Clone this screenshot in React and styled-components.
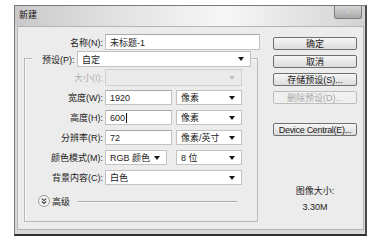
import React from 'react';
import styled, { createGlobalStyle } from 'styled-components';

const GlobalStyle = createGlobalStyle`
  html, body {
    margin: 0;
    padding: 0;
    background: #ffffff;
  }
  body {
    font-family: "Liberation Sans", "Noto Sans CJK SC", sans-serif;
    font-size: 9px;
    color: #222222;
  }
`;

const Page = styled.div`
  padding: 5px 12px 0 14px;
`;

const Window = styled.div`
  box-sizing: border-box;
  width: 353px;
  height: 231px;
  display: flex;
  flex-direction: column;
  padding: 0 1px 4px 2px;
  background: #d8d8d8;
  border: 1px solid #7a7a7a;
  border-right: 2px solid #4a4a4a;
  border-bottom: 2px solid #2e2e2e;
`;

const TitleBar = styled.div`
  height: 20px;
  display: flex;
  justify-content: space-between;
  align-items: flex-start;
  background: linear-gradient(to right, #c9c9c9 0%, #e6e6e6 35%, #f7f7f7 60%, #d2d2d2 100%);
  margin: 0 -1px 0 -2px;
`;

const Title = styled.span`
  padding-left: 4px;
  line-height: 18px;
  font-size: 9px;
  color: #111;
`;

const CloseButton = styled.div`
  width: 28px;
  height: 13px;
  margin-right: 3px;
  box-sizing: border-box;
  border: 1px solid #7d7d7d;
  border-top: none;
  border-radius: 0 0 3px 3px;
  background: linear-gradient(to bottom, #d8d8d8, #a9a9a9);
  color: #f4f4f4;
  font-size: 9px;
  line-height: 11px;
  text-align: center;
  text-shadow: 0 0 1px #555;
`;

const Body = styled.div`
  flex: 1;
  display: flex;
  background: #ececec;
  border: 1px solid #b4b4b4;
`;

const LeftCol = styled.div`
  width: 243px;
  display: flex;
  flex-direction: column;
`;

const RightCol = styled.div`
  width: 84px;
  margin-left: 12px;
  padding-top: 10px;
  display: flex;
  flex-direction: column;
  gap: 5px;
`;

const NameRow = styled.div`
  margin-top: 7px;
  height: 16px;
  display: flex;
  align-items: center;
`;

const Label = styled.span`
  width: ${p => p.$w}px;
  margin-right: 2px;
  text-align: right;
  white-space: nowrap;
  color: ${p => (p.$disabled ? '#b0b0b0' : '#222')};
`;

const TextBox = styled.div`
  box-sizing: border-box;
  width: ${p => p.$w}px;
  height: ${p => p.$h || 15}px;
  padding-left: 4px;
  display: flex;
  align-items: center;
  background: #ffffff;
  border: 1px solid #c2c2c2;
  border-top-color: #a9a9a9;
  white-space: nowrap;
`;

const Caret = styled.span`
  display: inline-block;
  width: 0;
  height: 10px;
  margin-left: 1px;
  border-left: 1px solid #111;
`;

const Select = styled.div`
  box-sizing: border-box;
  width: ${p => p.$w}px;
  height: ${p => p.$h || 15}px;
  margin-left: ${p => p.$ml || 0}px;
  padding: 0 6px 0 4px;
  display: flex;
  align-items: center;
  justify-content: space-between;
  background: ${p => (p.$disabled ? '#ebebeb' : '#ffffff')};
  border: 1px solid ${p => (p.$disabled ? '#d0d0d0' : '#c2c2c2')};
  white-space: nowrap;
`;

const Arrow = styled.span`
  width: 0;
  height: 0;
  border-left: 3px solid transparent;
  border-right: 3px solid transparent;
  border-top: 4px solid ${p => (p.$disabled ? '#c4c4c4' : '#1a1a1a')};
`;

const Group = styled.div`
  box-sizing: border-box;
  width: 234px;
  height: 164px;
  margin: 8px 0 0 6px;
  border: 1px solid #b8b8b8;
  box-shadow: inset 1px 1px 0 #fafafa;
  display: flex;
  flex-direction: column;
`;

const Legend = styled.div`
  height: 16px;
  margin: -8px 6px 0 7px;
  padding-left: 10px;
  display: flex;
  align-items: center;
  background: #ececec;
`;

const Row = styled.div`
  height: 15px;
  margin-top: ${p => p.$mt || 5}px;
  display: flex;
  align-items: center;
`;

const Advanced = styled.div`
  height: 14px;
  margin: 9px 0 0 13px;
  display: flex;
  align-items: center;
`;

const AdvText = styled.span`
  margin-left: 2px;
`;

const Rule = styled.div`
  width: 159px;
  height: 1px;
  margin-left: 8px;
  background: #a8a8a8;
  box-shadow: 0 1px 0 #fafafa;
`;

const Button = styled.div`
  box-sizing: border-box;
  height: 13px;
  margin-top: ${p => p.$mt || 0}px;
  display: flex;
  align-items: center;
  justify-content: center;
  border: 1px solid ${p => (p.$disabled ? '#bdbdbd' : '#6f6f6f')};
  border-radius: 2px;
  background: ${p => (p.$disabled ? '#f0f0f0' : 'linear-gradient(to bottom, #f6f6f6, #dcdcdc)')};
  color: ${p => (p.$disabled ? '#a8a8a8' : '#1a1a1a')};
  white-space: nowrap;
  letter-spacing: ${p => (p.$tight ? '-0.3px' : '0')};
`;

const SizeInfo = styled.div`
  margin-top: 44px;
  display: flex;
  flex-direction: column;
  align-items: center;
  gap: 4px;
  line-height: 12px;
`;

const AdvIcon = () => (
  <svg width="12" height="12" viewBox="0 0 12 12">
    <circle cx="6" cy="6" r="5.5" fill="#f6f6f6" stroke="#9a9a9a" />
    <path d="M3.8 3.6 L6 5.6 L8.2 3.6 M3.8 6.4 L6 8.4 L8.2 6.4" fill="none" stroke="#333" strokeWidth="1.1" />
  </svg>
);

export default function App() {
  return (
    <Page>
      <GlobalStyle />
      <Window>
        <TitleBar>
          <Title>新建</Title>
          <CloseButton>x</CloseButton>
        </TitleBar>
        <Body>
          <LeftCol>
            <NameRow>
              <Label $w={85}>名称(N):</Label>
              <TextBox $w={155} $h={16}>未标题-1</TextBox>
            </NameRow>
            <Group>
              <Legend>
                <Label $w={32}>预设(P):</Label>
                <Select $w={174} $h={16} $ml={1}>
                  自定
                  <Arrow />
                </Select>
              </Legend>
              <Row $mt={3}>
                <Label $w={78} $disabled>大小(I):</Label>
                <Select $w={137} $h={17} $disabled>
                  <span />
                  <Arrow $disabled />
                </Select>
              </Row>
              <Row>
                <Label $w={78}>宽度(W):</Label>
                <TextBox $w={67}>1920</TextBox>
                <Select $w={66} $ml={4}>
                  像素
                  <Arrow />
                </Select>
              </Row>
              <Row>
                <Label $w={78}>高度(H):</Label>
                <TextBox $w={67}>
                  600
                  <Caret />
                </TextBox>
                <Select $w={66} $ml={4}>
                  像素
                  <Arrow />
                </Select>
              </Row>
              <Row>
                <Label $w={78}>分辨率(R):</Label>
                <TextBox $w={67}>72</TextBox>
                <Select $w={66} $ml={4}>
                  像素/英寸
                  <Arrow />
                </Select>
              </Row>
              <Row>
                <Label $w={78}>颜色模式(M):</Label>
                <Select $w={62}>
                  RGB 颜色
                  <Arrow />
                </Select>
                <Select $w={66} $ml={9}>
                  8 位
                  <Arrow />
                </Select>
              </Row>
              <Row>
                <Label $w={78}>背景内容(C):</Label>
                <Select $w={137}>
                  白色
                  <Arrow />
                </Select>
              </Row>
              <Advanced>
                <AdvIcon />
                <AdvText>高级</AdvText>
                <Rule />
              </Advanced>
            </Group>
          </LeftCol>
          <RightCol>
            <Button>确定</Button>
            <Button>取消</Button>
            <Button>存储预设(S)...</Button>
            <Button $disabled>删除预设(D)...</Button>
            <Button $mt={14} $tight>Device Central(E)...</Button>
            <SizeInfo>
              <span>图像大小:</span>
              <span>3.30M</span>
            </SizeInfo>
          </RightCol>
        </Body>
      </Window>
    </Page>
  );
}
